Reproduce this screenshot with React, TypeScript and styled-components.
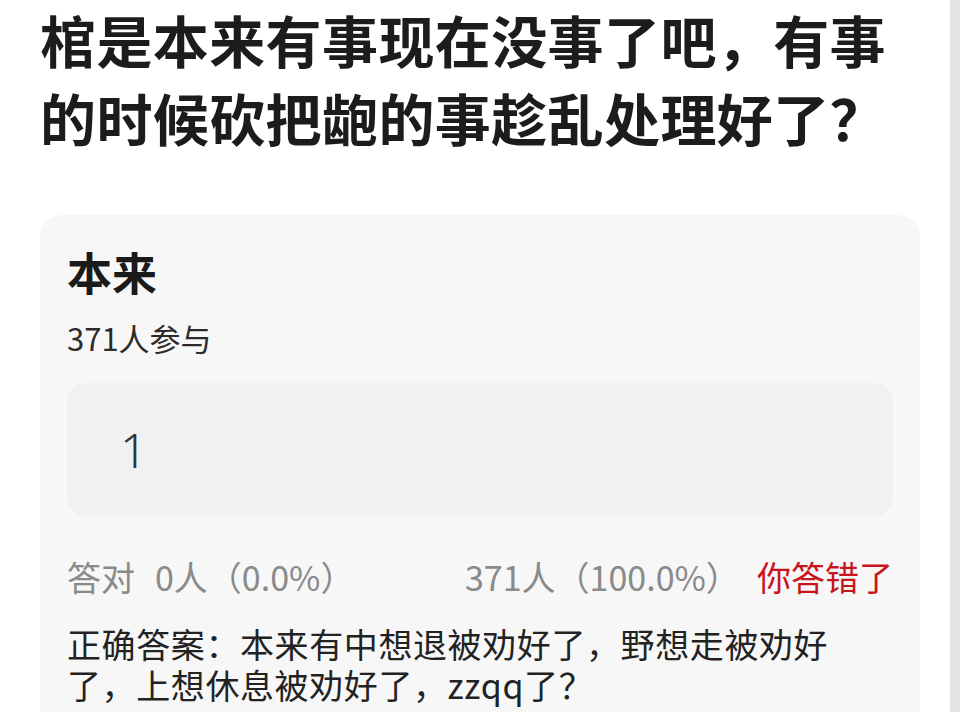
import React from 'react'
import styled, { createGlobalStyle } from 'styled-components'

const GlobalStyle = createGlobalStyle`
  html, body {
    margin: 0;
    padding: 0;
    background: #ffffff;
  }
  body {
    font-family: 'Noto Sans CJK SC', 'Noto Sans', sans-serif;
    overflow: hidden;
  }
`

const Page = styled.div`
  display: flex;
  width: 960px;
  height: 712px;
  overflow: hidden;
  background: #ffffff;
`

const Content = styled.main`
  flex: 1;
  padding: 0 30px 0 40px;
  display: flex;
  flex-direction: column;
`

const Track = styled.div`
  width: 10px;
  flex: 0 0 10px;
  background: #e3e3e3;
`

const Question = styled.h1`
  margin: 0;
  font-size: 56px;
  line-height: 78px;
  font-weight: 700;
  letter-spacing: 0.4px;
  color: #1c1c1c;
`

const Card = styled.section`
  margin-top: 59px;
  background: #f7f7f7;
  border-radius: 22px;
  padding: 29px 27px 60px;
  display: flex;
  flex-direction: column;
  flex-shrink: 0;
`

const OptionTitle = styled.h2`
  margin: 0;
  font-size: 45px;
  line-height: 56px;
  font-weight: 700;
  color: #1a1a1a;
`

const Joined = styled.div`
  margin-top: 18px;
  font-size: 31px;
  line-height: 40px;
  color: #2b2b2b;
`

const AnswerBox = styled.div`
  margin-top: 25px;
  height: 133px;
  background: #f1f1f1;
  border-radius: 18px;
  display: flex;
  align-items: center;
  padding-left: 53px;
  font-size: 48px;
  font-weight: 300;
  color: #333333;
  font-family: 'Noto Sans', 'Noto Sans CJK SC', sans-serif;
`

const Stats = styled.div`
  margin-top: 39px;
  display: flex;
  align-items: center;
  font-size: 34px;
  line-height: 44px;
  color: #8a8a8a;
`

const StatCol = styled.div<{ $width?: number }>`
  flex: ${(p) => (p.$width ? `0 0 ${p.$width}px` : '0 0 auto')};
  white-space: nowrap;
`

const Label = styled.span`
  margin-right: 20px;
`

const Verdict = styled.div`
  margin-left: auto;
  color: #c8141c;
  white-space: nowrap;
`

const Explain = styled.p`
  margin: 24px 0 0;
  max-width: 790px;
  font-size: 34px;
  line-height: 41px;
  letter-spacing: 0.6px;
  color: #222222;
`

export default function App() {
  return (
    <Page>
      <GlobalStyle />
      <Content>
        <Question>棺是本来有事现在没事了吧，有事的时候砍把龅的事趁乱处理好了？</Question>
        <Card>
          <OptionTitle>本来</OptionTitle>
          <Joined>371人参与</Joined>
          <AnswerBox>1</AnswerBox>
          <Stats>
            <StatCol $width={398}>
              <Label>答对</Label>0人（0.0%）
            </StatCol>
            <StatCol>371人（100.0%）</StatCol>
            <Verdict>你答错了</Verdict>
          </Stats>
          <Explain>正确答案：本来有中想退被劝好了，野想走被劝好了，上想休息被劝好了，zzqq了？</Explain>
        </Card>
      </Content>
      <Track />
    </Page>
  )
}
